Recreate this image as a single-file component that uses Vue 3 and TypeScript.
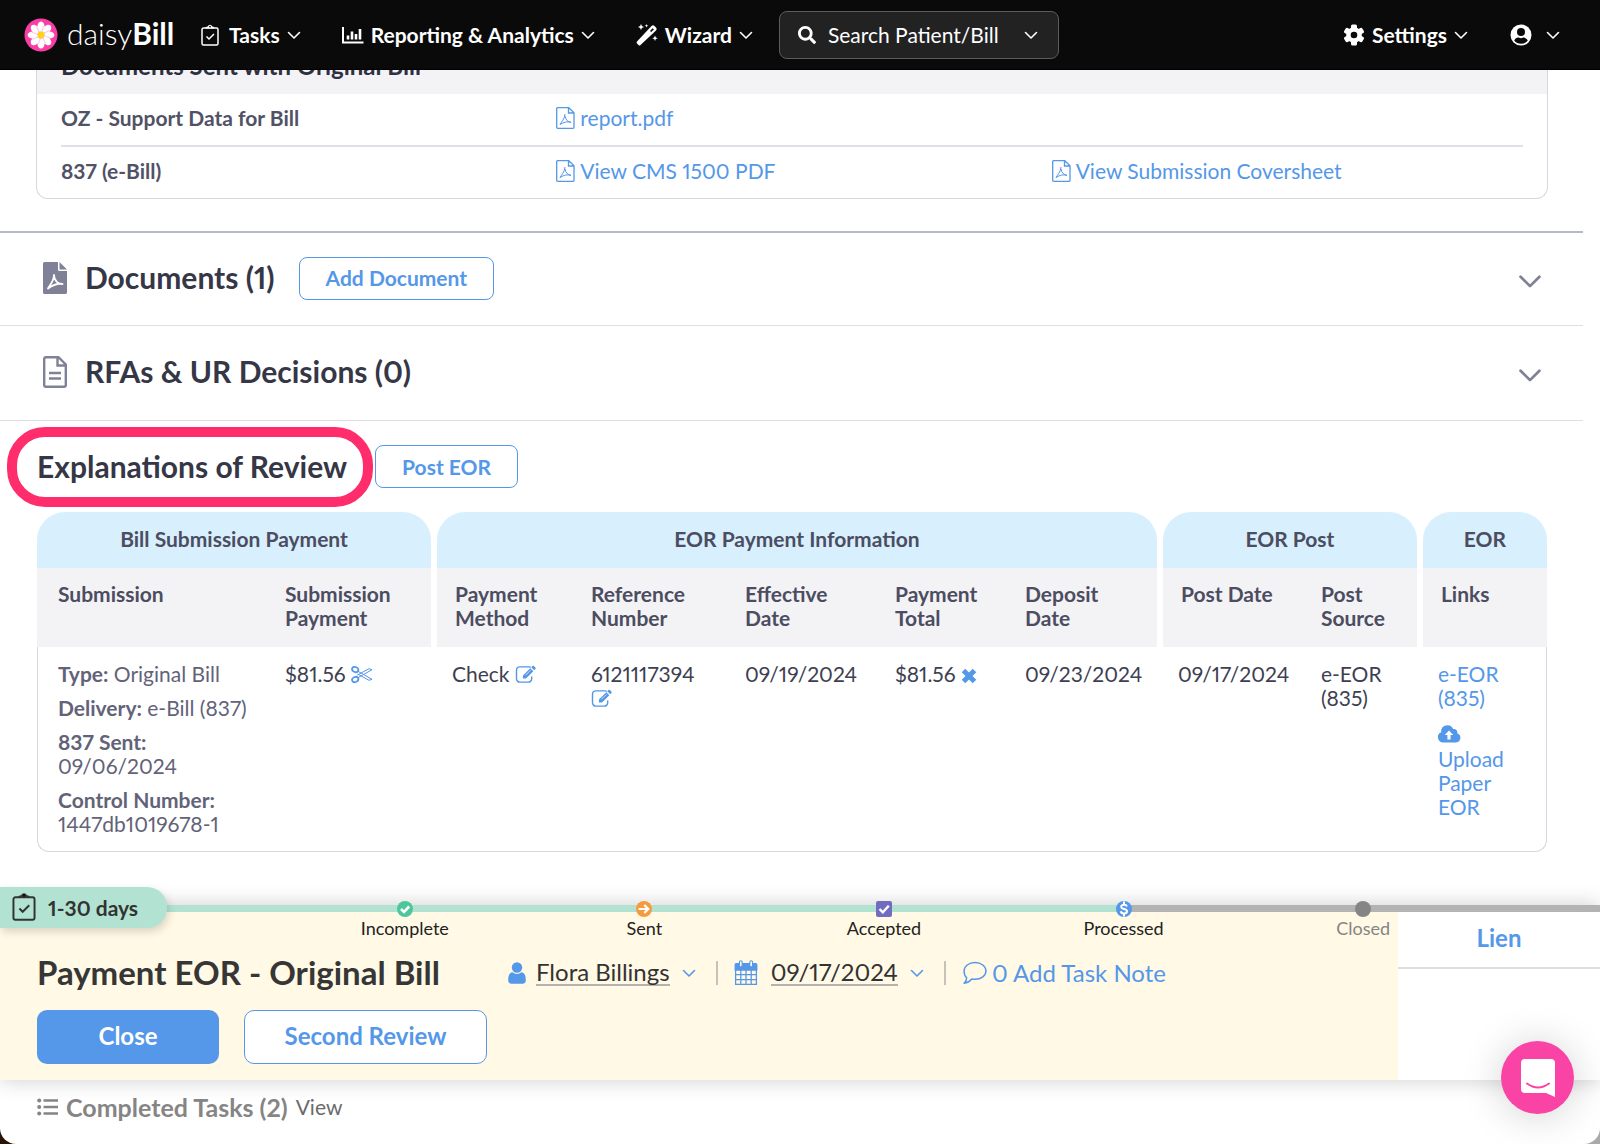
<script setup lang="ts">
interface Step {
  label: string
  icon: string
  tone: string
}

const steps: Step[] = [
  { label: 'Incomplete', icon: 'i-ok', tone: 'green' },
  { label: 'Sent', icon: 'i-arrow', tone: 'orange' },
  { label: 'Accepted', icon: 'i-boxcheck', tone: 'purple' },
  { label: 'Processed', icon: 'i-dollar', tone: 'blue' },
  { label: 'Closed', icon: 'i-dot', tone: 'gray' },
]

const columnWidths: number[] = [230, 167, 139, 154, 150, 130, 153, 143, 117, 127]
const tableWidth = columnWidths.reduce((sum, w) => sum + w, 0)
const petals: number[] = [0, 45, 90, 135, 180, 225, 270, 315]
</script>

<template>
  <div class="page">
    <svg class="sprite" aria-hidden="true">
      <symbol id="i-chevron" viewBox="0 0 14 14">
        <path d="M1.5 4.5 7 10l5.5-5.500" fill="none" stroke="currentColor" stroke-width="1.600" stroke-linecap="round" stroke-linejoin="round" />
      </symbol>
      <symbol id="i-clipboard" viewBox="0 0 18 22">
        <path d="M2.500 4h13a1.500 1.500 0 0 1 1.500 1.500v14a1.500 1.500 0 0 1-1.500 1.500h-13a1.500 1.500 0 0 1-1.500-1.500v-14A1.500 1.500 0 0 1 2.500 4zM5.500 12.500l2.500 2.500 5-5" fill="none" stroke="currentColor" stroke-width="1.500" />
        <path d="M4.500 4.500c0-1.500 1-2 2.300-2a2.300 2.300 0 0 1 4.400 0c1.300 0 2.300.5 2.300 2z" fill="currentColor" />
        <circle cx="9" cy="2.600" r="0.900" class="hole" />
      </symbol>
      <symbol id="i-bars" viewBox="0 0 22 20">
        <path d="M1 2v15.500h20.500" fill="none" stroke="currentColor" stroke-width="2" />
        <path d="M6 14.500v-4M10 14.500V6.500M14 14.500V9M18 14.500V4" stroke="currentColor" stroke-width="2.600" />
      </symbol>
      <symbol id="i-wand" viewBox="0 0 22 22">
        <path d="m1 17.500 14.500-15.500q1.500-1.500 3 0l1.500 1.500q1.500 1.500 0 3L4.500 21q-1 1-2 0L1 19.500q-1-1 0-2z" fill="currentColor" />
        <path d="m14 7 2.600-2.800 1.300 1.300L15.200 8z" fill="#0a0a0a" />
        <path d="m5 0 .9 2.100L8 3l-2.100.9L5 6l-.9-2.100L2 3l2.100-.9zM10.500 0l.5 1.300 1.300.5-1.300.5-.5 1.300-.5-1.300-1.300-.5 1.300-.5zM19 11.500l.8 2 2 .8-2 .8-.8 2-.8-2-2-.8 2-.8z" fill="currentColor" />
      </symbol>
      <symbol id="i-search" viewBox="0 0 512 512">
        <path fill="currentColor" d="M505 442.700L405.300 343c-4.500-4.500-10.600-7-17-7H372c27.600-35.300 44-79.700 44-128C416 93.100 322.900 0 208 0S0 93.100 0 208s93.100 208 208 208c48.300 0 92.700-16.400 128-44v16.300c0 6.400 2.500 12.500 7 17l99.700 99.700c9.400 9.400 24.600 9.400 33.900 0l28.300-28.300c9.400-9.400 9.400-24.600.1-34zM208 336c-70.700 0-128-57.200-128-128 0-70.700 57.200-128 128-128 70.700 0 128 57.200 128 128 0 70.700-57.200 128-128 128z" />
      </symbol>
      <symbol id="i-gear" viewBox="0 0 22 22">
        <g fill="currentColor">
          <rect v-for="a in [0, 60, 120]" :key="a" x="8" y="0.500" width="6" height="21" rx="1.500" :transform="`rotate(${a} 11 11)`" />
          <circle cx="11" cy="11" r="7.800" />
        </g>
        <circle cx="11" cy="11" r="3.300" fill="#0a0a0a" />
      </symbol>
      <symbol id="i-user-circle" viewBox="0 0 22 22">
        <circle cx="11" cy="11" r="10.500" fill="currentColor" />
        <circle cx="11" cy="8" r="4" fill="#0a0a0a" />
        <path d="M4.200 16.500c1.300-2.600 3.300-2.900 4.600-2.900 1.400.7 3 .7 4.400 0 1.300 0 3.300.3 4.600 2.900a8.700 8.700 0 0 1-13.600 0z" fill="#0a0a0a" />
      </symbol>
      <symbol id="i-pdf" viewBox="0 0 19 22">
        <path d="M1.500.7h11.300l5.200 5v14.600a1 1 0 0 1-1 1H1.700a1 1 0 0 1-1-1V1.500a.8.800 0 0 1 .8-.8zM12.500 1v5h5" fill="none" stroke="currentColor" stroke-width="1.300" />
        <path d="M4 17.500c1-2 5-6 5-10.500M9 9c.8 4 3 6 6 6.300-4-1-7-.3-11 2.200" fill="none" stroke="currentColor" stroke-width="1" stroke-linejoin="round" />
      </symbol>
      <symbol id="i-pdf-solid" viewBox="0 0 24 32">
        <path d="M1.500 0H15v7.500A1.500 1.500 0 0 0 16.500 9H24v21.500a1.500 1.500 0 0 1-1.500 1.500h-21A1.500 1.500 0 0 1 0 30.500v-29A1.500 1.500 0 0 1 1.500 0zM16.500 0 24 7.500h-7.500z" fill="currentColor" />
        <path d="M5 26.500c1.500-3 6-7 6-13.500 0 5 4 9.500 8.500 9-5-1-9 .5-14.500 4.500z" fill="none" stroke="#fff" stroke-width="1.800" stroke-linejoin="round" />
      </symbol>
      <symbol id="i-file" viewBox="0 0 24 32">
        <path d="M3 1.200h12.500l7.300 7.300V29a1.800 1.800 0 0 1-1.800 1.800H3A1.800 1.800 0 0 1 1.200 29V3A1.800 1.800 0 0 1 3 1.200zM14.500 1.500v8h8" fill="none" stroke="currentColor" stroke-width="2.400" />
        <path d="M6 17h12M6 22.500h12" stroke="currentColor" stroke-width="2.400" />
      </symbol>
      <symbol id="i-scissors" viewBox="0 0 22 18">
        <g fill="none" stroke="currentColor">
          <ellipse cx="4.200" cy="4" rx="3.200" ry="2.500" stroke-width="1.800" transform="rotate(25 4.200 4)" />
          <ellipse cx="4.200" cy="14" rx="3.200" ry="2.500" stroke-width="1.800" transform="rotate(-25 4.200 14)" />
          <path d="m7 5.800 14 8-3 1L6.500 8.500M7 12.200l14-8-3-1L6.500 9.500" stroke-width="1" />
        </g>
      </symbol>
      <symbol id="i-edit" viewBox="0 0 22 20">
        <path d="M16 2.500A4 4 0 0 0 14 2H4.500A3.500 3.500 0 0 0 1 5.500v9A3.500 3.500 0 0 0 4.500 18h9a3.500 3.500 0 0 0 3.500-3.500V12" fill="none" stroke="currentColor" stroke-width="1.500" />
        <path d="m7.800 11 7.700-7.700 3.200 3.200-7.700 7.700H7.800zM16.500 2.300l1.200-1.200q.8-.8 1.600 0l1.600 1.600q.8.800 0 1.600l-1.200 1.200z" fill="currentColor" />
        <path d="m10.500 10.800 5.200-5.200" stroke="#fff" stroke-width="0.700" />
      </symbol>
      <symbol id="i-x" viewBox="0 0 16 16">
        <path d="m2.500 2.500 11 11M13.500 2.500l-11 11" stroke="currentColor" stroke-width="5" />
      </symbol>
      <symbol id="i-cloud" viewBox="0 0 23 18">
        <path d="M5.500 17.500A5.300 5.300 0 0 1 3.200 7.300 6.300 6.300 0 0 1 15.200 4a3.400 3.400 0 0 1 4 4.200 4.800 4.800 0 0 1-1.200 9.300z" fill="currentColor" />
        <path d="m11 5.500 4.300 4.500h-2.700v4.500H9.400V10H6.700z" fill="#fff" />
      </symbol>
      <symbol id="i-user" viewBox="0 0 18 22">
        <circle cx="9" cy="5.500" r="5.200" fill="currentColor" />
        <path d="M4.500 10.200a6.500 6.500 0 0 0 9 0c3.500.6 4.300 4 4.300 8 0 2-1.300 3.500-3.300 3.500h-11c-2 0-3.300-1.500-3.300-3.500 0-4 .8-7.400 4.300-8z" fill="currentColor" />
      </symbol>
      <symbol id="i-calendar" viewBox="0 0 22 25">
        <path d="M1 9.500h20v14H1zM1 14h20M1 18.800h20M6 9.500v14M11 9.500v14M16 9.500v14" fill="none" stroke="currentColor" stroke-width="1.200" />
        <path d="M0 4.500A1.500 1.500 0 0 1 1.500 3h19A1.500 1.500 0 0 1 22 4.500V10H0z" fill="currentColor" />
        <rect x="4.700" y="0.700" width="2.600" height="6" rx="1.300" fill="#fff9e5" stroke="currentColor" />
        <rect x="14.700" y="0.700" width="2.600" height="6" rx="1.300" fill="#fff9e5" stroke="currentColor" />
      </symbol>
      <symbol id="i-bubble" viewBox="0 0 24 23">
        <path d="M12.500 1.500c6 0 10.500 3.500 10.500 8s-4.500 8-10.500 8q-1.500 0-3-.3C7.500 19.500 5 21 2 21.300c1.500-1.300 2.500-3 2.500-5.300C2.800 14.500 2 12 2 9.500c0-4.500 4.500-8 10.500-8z" fill="none" stroke="currentColor" stroke-width="1.400" stroke-linejoin="round" />
      </symbol>
      <symbol id="i-list" viewBox="0 0 21 18">
        <g fill="currentColor">
          <circle cx="2.200" cy="2.500" r="2" /><circle cx="2.200" cy="9" r="2" /><circle cx="2.200" cy="15.500" r="2" />
          <path d="M6.500 1.200H21v2.600H6.500zM6.500 7.700H21v2.600H6.500zM6.500 14.200H21v2.600H6.500z" />
        </g>
      </symbol>
      <symbol id="i-ok" viewBox="0 0 16 16">
        <circle cx="8" cy="8" r="8" fill="currentColor" /><path d="m4 8 3 3 5.200-5.500" fill="none" stroke="#fff" stroke-width="2.600" />
      </symbol>
      <symbol id="i-arrow" viewBox="0 0 16 16">
        <circle cx="8" cy="8" r="8" fill="currentColor" /><path d="M2.500 8H12M8.300 4l4 4-4 4" fill="none" stroke="#fff" stroke-width="2.200" />
      </symbol>
      <symbol id="i-boxcheck" viewBox="0 0 16 16">
        <rect width="16" height="16" rx="2" fill="currentColor" /><path d="m3.500 8 3.300 3.300 6-6.600" fill="none" stroke="#fff" stroke-width="2.400" />
      </symbol>
      <symbol id="i-dollar" viewBox="0 0 16 16">
        <circle cx="8" cy="8" r="8" fill="currentColor" /><path d="M11 5.500C10.500 4 9.500 3.700 8 3.700c-1.600 0-2.800.7-2.800 2C5.200 8.800 11 7 11 10.200c0 1.400-1.300 2.200-3 2.200s-3-.7-3.300-2.200M8 .5v3M8 12.500v3" fill="none" stroke="#fff" stroke-width="2" />
      </symbol>
      <symbol id="i-dot" viewBox="0 0 16 16"><circle cx="8" cy="8" r="8" fill="currentColor" /></symbol>
    </svg>

    <header class="topbar">
      <a class="brand" href="#">
        <svg class="daisy" viewBox="0 0 34 34" aria-hidden="true">
          <circle cx="17" cy="17" r="16.500" fill="#f93fa6" />
          <ellipse v-for="a in petals" :key="a" cx="17" cy="8.800" rx="3.600" ry="5.200" fill="#fff" :transform="`rotate(${a} 17 17)`" />
          <path v-for="a in petals" :key="'l' + a" d="M17 14q2-2 2.500-6" fill="none" stroke="#fbc3e2" stroke-width="1" :transform="`rotate(${a} 17 17)`" />
          <circle cx="17" cy="17" r="3.400" fill="#ffd21a" />
        </svg>
        <span class="wordmark">daisy<b>Bill</b></span>
      </a>
      <nav class="nav">
        <button type="button"><svg class="ic-clip"><use href="#i-clipboard" /></svg>Tasks<svg class="chev"><use href="#i-chevron" /></svg></button>
        <button type="button"><svg class="ic22"><use href="#i-bars" /></svg>Reporting &amp; Analytics<svg class="chev"><use href="#i-chevron" /></svg></button>
        <button type="button"><svg class="ic22"><use href="#i-wand" /></svg>Wizard<svg class="chev"><use href="#i-chevron" /></svg></button>
      </nav>
      <button type="button" class="search">
        <svg class="ic-search"><use href="#i-search" /></svg><span>Search Patient/Bill</span><svg class="chev"><use href="#i-chevron" /></svg>
      </button>
      <div class="account">
        <button type="button"><svg class="ic22"><use href="#i-gear" /></svg>Settings<svg class="chev"><use href="#i-chevron" /></svg></button>
        <button type="button" class="nav-user" aria-label="Account"><svg class="ic22"><use href="#i-user-circle" /></svg><svg class="chev"><use href="#i-chevron" /></svg></button>
      </div>
    </header>

    <main>
      <section class="sent">
        <h3>Documents Sent with Original Bill</h3>
        <div class="sent-row">
          <b>OZ - Support Data for Bill</b>
          <a href="#"><svg class="ic-pdf"><use href="#i-pdf" /></svg>report.pdf</a>
        </div>
        <div class="sent-row">
          <b>837 (e-Bill)</b>
          <a href="#"><svg class="ic-pdf"><use href="#i-pdf" /></svg>View CMS 1500 PDF</a>
          <a href="#"><svg class="ic-pdf"><use href="#i-pdf" /></svg>View Submission Coversheet</a>
        </div>
      </section>

      <section class="fold first">
        <svg class="ic-file"><use href="#i-pdf-solid" /></svg>
        <h2>Documents (1)</h2>
        <button type="button" class="outline">Add Document</button>
        <svg class="fold-chev"><use href="#i-chevron" /></svg>
      </section>
      <section class="fold">
        <svg class="ic-file"><use href="#i-file" /></svg>
        <h2>RFAs &amp; UR Decisions (0)</h2>
        <svg class="fold-chev"><use href="#i-chevron" /></svg>
      </section>

      <section class="eor">
        <div class="eor-head">
          <h2 class="marked">Explanations of Review</h2>
          <button type="button" class="outline">Post EOR</button>
        </div>
        <table>
          <colgroup>
            <col v-for="(w, i) in columnWidths" :key="i" :style="{ width: (w / tableWidth) * 100 + '%' }" />
          </colgroup>
          <thead>
            <tr class="groups">
              <th colspan="2" class="gl"><span>Bill Submission Payment</span></th>
              <th colspan="5"><span>EOR Payment Information</span></th>
              <th colspan="2"><span>EOR Post</span></th>
              <th class="gr"><span>EOR</span></th>
            </tr>
            <tr class="cols">
              <th class="edge">Submission</th>
              <th class="ge">Submission Payment</th>
              <th class="gs">Payment Method</th>
              <th>Reference Number</th>
              <th>Effective<br />Date</th>
              <th>Payment Total</th>
              <th class="ge">Deposit<br />Date</th>
              <th class="gs">Post Date</th>
              <th class="ge">Post Source</th>
              <th class="gs">Links</th>
            </tr>
          </thead>
          <tbody>
            <tr>
              <td class="edge soft">
                <p><b>Type:</b> Original Bill</p>
                <p><b>Delivery:</b> e-Bill (837)</p>
                <p><b>837 Sent:</b><br />09/06/2024</p>
                <p><b>Control Number:</b><br />1447db1019678-1</p>
              </td>
              <td>$81.56 <a href="#" aria-label="Split payment"><svg class="ic-edit"><use href="#i-scissors" /></svg></a></td>
              <td>Check <a href="#" aria-label="Edit method"><svg class="ic-edit"><use href="#i-edit" /></svg></a></td>
              <td>6121117394<br /><a href="#" aria-label="Edit number"><svg class="ic-edit"><use href="#i-edit" /></svg></a></td>
              <td>09/19/2024</td>
              <td>$81.56 <a href="#" aria-label="Remove payment"><svg class="ic-x"><use href="#i-x" /></svg></a></td>
              <td>09/23/2024</td>
              <td>09/17/2024</td>
              <td>e-EOR<br />(835)</td>
              <td class="last">
                <p><a href="#">e-EOR<br />(835)</a></p>
                <p><a href="#"><svg class="ic-cloud"><use href="#i-cloud" /></svg>Upload<br />Paper<br />EOR</a></p>
              </td>
            </tr>
          </tbody>
        </table>
      </section>
    </main>

    <footer class="dock">
      <div class="track"><div class="done"></div></div>
      <div class="days"><svg class="ic-days"><use href="#i-clipboard" /></svg>1-30 days</div>
      <ol class="steps">
        <li v-for="s in steps" :key="s.label" :class="s.tone">
          <svg class="marker"><use :href="'#' + s.icon" /></svg>
          <span>{{ s.label }}</span>
        </li>
      </ol>
      <div class="panels">
        <div class="task">
          <div class="task-line">
            <h1>Payment EOR - Original Bill</h1>
            <div class="task-meta">
              <button type="button" class="pick"><svg class="ic-user"><use href="#i-user" /></svg><span>Flora Billings</span><svg class="chev"><use href="#i-chevron" /></svg></button>
              <button type="button" class="pick date"><svg class="ic-cal"><use href="#i-calendar" /></svg><span>09/17/2024</span><svg class="chev"><use href="#i-chevron" /></svg></button>
              <a href="#" class="note"><svg class="ic-bubble"><use href="#i-bubble" /></svg>0 Add Task Note</a>
            </div>
          </div>
          <div class="actions">
            <button type="button" class="primary">Close</button>
            <button type="button" class="second">Second Review</button>
          </div>
        </div>
        <div class="lien"><a href="#">Lien</a></div>
      </div>
    </footer>
    <div class="completed">
      <svg class="ic-list"><use href="#i-list" /></svg><b>Completed Tasks (2)</b><a href="#">View</a>
    </div>

    <button type="button" class="chat" aria-label="Open chat">
      <svg viewBox="0 0 34 38"><path d="M4 0h26a4 4 0 0 1 4 4v34l-9-4H4a4 4 0 0 1-4-4V4a4 4 0 0 1 4-4z" fill="#fff" /><path d="M6 24.500q11 8 22 0" fill="none" stroke="#f944a6" stroke-width="2" stroke-linecap="round" /></svg>
    </button>
  </div>
</template>

<style>
body {
  margin: 0;
  background: linear-gradient(90deg, #2a1408 50%, #a9a9a9 50%);
}
</style>

<style scoped>
.page {
  position: relative;
  min-height: 100vh;
  box-sizing: border-box;
  overflow: hidden;
  display: flex;
  flex-direction: column;
  background: #fff;
  border-radius: 0 0 16px 16px;
  font-family: Lato, 'Liberation Sans', sans-serif;
  font-variant-numeric: proportional-nums;
  font-size: 21px;
  line-height: 24px;
  color: #3e3f52;
}
.page *,
.page *::before {
  box-sizing: border-box;
}
.sprite {
  position: absolute;
  width: 0;
  height: 0;
}
svg {
  flex: none;
}
h1,
h2,
h3,
p,
ol {
  margin: 0;
  padding: 0;
}
a {
  color: #5597e8;
  text-decoration: none;
}
b,
th {
  font-weight: 700;
}
button {
  font: inherit;
  font-variant-numeric: inherit;
  color: inherit;
  background: none;
  border: 0;
  padding: 0;
  cursor: pointer;
}

.topbar {
  position: relative;
  z-index: 2;
  height: 70px;
  display: flex;
  align-items: center;
  padding: 0 40px 0 24px;
  background: #0a0a0a;
  border-bottom: 1px solid #000;
  color: #fff;
  font-weight: 700;
}
.brand {
  display: flex;
  align-items: center;
  gap: 9px;
  width: 177px;
  color: #fff;
  font-weight: 300;
}
.brand b {
  font-weight: 700;
}
.daisy {
  width: 34px;
  height: 34px;
}
.wordmark {
  padding-bottom: 4px;
  font-size: 30px;
  line-height: 36px;
}
.nav,
.account {
  display: flex;
}
.account {
  margin-left: auto;
  gap: 42px;
}
.nav {
  gap: 41px;
}
.nav button,
.account button {
  display: flex;
  align-items: center;
  gap: 7px;
  white-space: nowrap;
}
.account .nav-user {
  gap: 14px;
}
.chev {
  width: 14px;
  height: 14px;
}
.ic22 {
  width: 22px;
  height: 22px;
}
.ic-clip {
  width: 18px;
  height: 22px;
  margin-right: 3px;
}
.hole {
  fill: #0a0a0a;
}
.search {
  display: flex;
  align-items: center;
  width: 280px;
  height: 48px;
  margin-left: 26px;
  padding: 0 20px 0 18px;
  border: 1px solid #5c5c5c;
  border-radius: 8px;
  background: #222;
  font-weight: 400;
}
.search span {
  margin: 0 auto 0 12px;
}
.ic-search {
  width: 18px;
  height: 18px;
}

main {
  margin-right: 17px;
}
.sent {
  margin: -24px 35px 0 36px;
  border: 1px solid #d6d6e0;
  border-top: 0;
  border-radius: 0 0 12px 12px;
}
.sent h3 {
  height: 48px;
  padding: 8px 24px 0;
  background: #f3f3f6;
  font-size: 24px;
  line-height: 24px;
  color: #2f3142;
}
.sent-row {
  display: grid;
  grid-template-columns: repeat(3, 1fr);
  column-gap: 24px;
  margin: 0 24px;
  padding-bottom: 3px;
  height: 51px;
  align-items: center;
  color: #515266;
}
.sent-row + .sent-row {
  height: 53px;
  border-top: 2px solid #e0e0e7;
}
.sent-row a,
.note {
  display: flex;
  align-items: center;
  gap: 5px;
}
.ic-pdf {
  width: 19px;
  height: 22px;
}

.fold {
  display: flex;
  align-items: center;
  height: 95px;
  padding: 0 41px 2px 43px;
  border-bottom: 1px solid #dfdfe3;
}
.fold.first {
  margin-top: 32px;
  border-top: 2px solid #b5b9c8;
}
.ic-file {
  width: 24px;
  height: 32px;
  margin-right: 18px;
  color: #7f8297;
}
h2 {
  padding-bottom: 2px;
  font-size: 30px;
  line-height: 36px;
  font-weight: 700;
  color: #363746;
}
.outline {
  height: 43px;
  padding: 0 26px;
  border: 1px solid #5597e8;
  border-radius: 8px;
  background: #fff;
  color: #5597e8;
  font-weight: 700;
}
.fold .outline {
  margin-left: 24px;
}
.fold-chev {
  width: 24px;
  height: 24px;
  margin: 6px 0 0 auto;
  color: #7f8297;
}

.eor {
  margin: 0 36px 0 37px;
}
.eor-head {
  display: flex;
  align-items: center;
  gap: 28px;
  height: 91px;
}
.marked {
  position: relative;
}
.marked::before {
  content: '';
  position: absolute;
  inset: -21px -26px -21px -30px;
  border: 10px solid #ff2d6c;
  border-radius: 38px;
}
table {
  width: 100%;
  table-layout: fixed;
  border-collapse: separate;
  border-spacing: 0;
}
th,
td {
  text-align: left;
  vertical-align: top;
  padding: 15px 0 15px 18px;
}
th {
  color: #4c4d61;
}
.groups th {
  padding: 0 3px;
  text-align: center;
}
.groups span {
  display: block;
  padding-bottom: 2px;
  line-height: 54px;
  background: #d8f0fe;
  border-radius: 28px 28px 0 0;
}
.groups .gl {
  padding-left: 0;
}
.groups .gr {
  padding-right: 0;
}
.cols th {
  height: 79px;
  padding-top: 14px;
  background: #f3f3f6;
}
.cols .gs {
  border-left: 3px solid #fff;
}
.cols .ge {
  border-right: 3px solid #fff;
}
th.edge {
  padding-left: 21px;
}
td {
  border-bottom: 1px solid #d6d6e0;
}
td.edge {
  padding-left: 20px;
  border-left: 1px solid #d6d6e0;
  border-bottom-left-radius: 12px;
}
td.last {
  border-right: 1px solid #d6d6e0;
  border-bottom-right-radius: 12px;
}
td.soft {
  color: #626378;
}
td p + p {
  margin-top: 10px;
}
.ic-edit {
  width: 22px;
  height: 19px;
  vertical-align: -2px;
}
.ic-x {
  width: 16px;
  height: 16px;
  vertical-align: -2px;
}
.ic-cloud {
  display: block;
  width: 23px;
  height: 18px;
  margin: 15px 0 4px;
}

.dock {
  position: relative;
  margin-top: 53px;
  box-shadow: 0 0 20px rgba(0, 0, 0, 0.2);
}
.track {
  height: 7px;
  background: #b3b3b3;
}
.done {
  width: 70%;
  height: 7px;
  background: #b2e3d2;
}
.days {
  position: absolute;
  left: 0;
  top: -18px;
  display: flex;
  align-items: center;
  gap: 12px;
  width: 167px;
  height: 41px;
  padding-left: 12px;
  border-radius: 0 20px 20px 0;
  background: #b2e3d2;
  box-shadow: 2px 4px 8px rgba(0, 0, 0, 0.15);
  color: #333;
  font-weight: 700;
}
.ic-days {
  width: 24px;
  height: 29px;
  margin-bottom: 3px;
}
.days .hole {
  fill: #b2e3d2;
}
.steps {
  position: absolute;
  top: -4px;
  left: calc(18% - 3px);
  width: calc(75% - 2px);
  display: flex;
  list-style: none;
  font-size: 18px;
  line-height: 22px;
  color: #222;
}
.steps li {
  flex: 1;
  display: flex;
  flex-direction: column;
  align-items: center;
}
.marker {
  width: 16px;
  height: 16px;
}
.green .marker { color: #4cc79b; }
.orange .marker { color: #f79a3e; }
.purple .marker { color: #726cc0; }
.blue .marker { color: #5597e8; }
.gray { color: #858585; }
.panels {
  display: flex;
  background: #fff;
}
.task {
  flex: 1;
  height: 168px;
  padding: 38px 0 0 37px;
  background: #fff9e5;
}
.task-line {
  display: flex;
  align-items: center;
}
h1 {
  width: 471px;
  font-size: 33px;
  line-height: 44px;
  font-weight: 700;
  color: #363636;
  white-space: nowrap;
}
.task-meta {
  display: flex;
  align-items: center;
  padding-top: 2px;
  font-size: 24px;
}
.pick {
  display: flex;
  align-items: center;
  gap: 10px;
  height: 24px;
  padding-right: 20px;
  margin-right: 16px;
  border-right: 2px solid #c4c2bb;
  color: #5597e8;
}
.pick span {
  color: #333;
  border-bottom: 2px solid #b4b2b0;
}
.pick .chev {
  margin-left: 2px;
}
.date span {
  margin-left: 3px;
}
.ic-user {
  width: 18px;
  height: 22px;
}
.ic-cal {
  width: 24px;
  height: 26px;
}
.ic-bubble {
  width: 25px;
  height: 24px;
}
.actions {
  display: flex;
  gap: 25px;
  margin-top: 16px;
}
.primary,
.second {
  height: 54px;
  padding-bottom: 2px;
  border-radius: 10px;
  font-size: 24px;
  font-weight: 700;
}
.primary {
  width: 182px;
  background: #5597e8;
  color: #fff;
}
.second {
  width: 243px;
  background: #fff;
  border: 1px solid #5597e8;
  color: #5597e8;
}
.lien {
  width: 202px;
}
.lien a {
  display: block;
  height: 57px;
  line-height: 52px;
  border-bottom: 2px solid #dedede;
  text-align: center;
  font-size: 24px;
  font-weight: 700;
}
.completed {
  display: flex;
  align-items: center;
  gap: 8px;
  height: 53px;
  padding-left: 37px;
  color: #858585;
}
.completed b {
  font-size: 25px;
}
.completed a {
  color: #6b6b6b;
}
.ic-list {
  width: 21px;
  height: 18px;
}
.chat {
  position: fixed;
  right: 26px;
  bottom: 30px;
  z-index: 3;
  width: 73px;
  height: 73px;
  border-radius: 50%;
  background: #f944a6;
  box-shadow: 0 2px 40px rgba(0, 0, 0, 0.18);
  display: flex;
  align-items: center;
  justify-content: center;
}
.chat svg {
  width: 34px;
  height: 38px;
}
</style>
